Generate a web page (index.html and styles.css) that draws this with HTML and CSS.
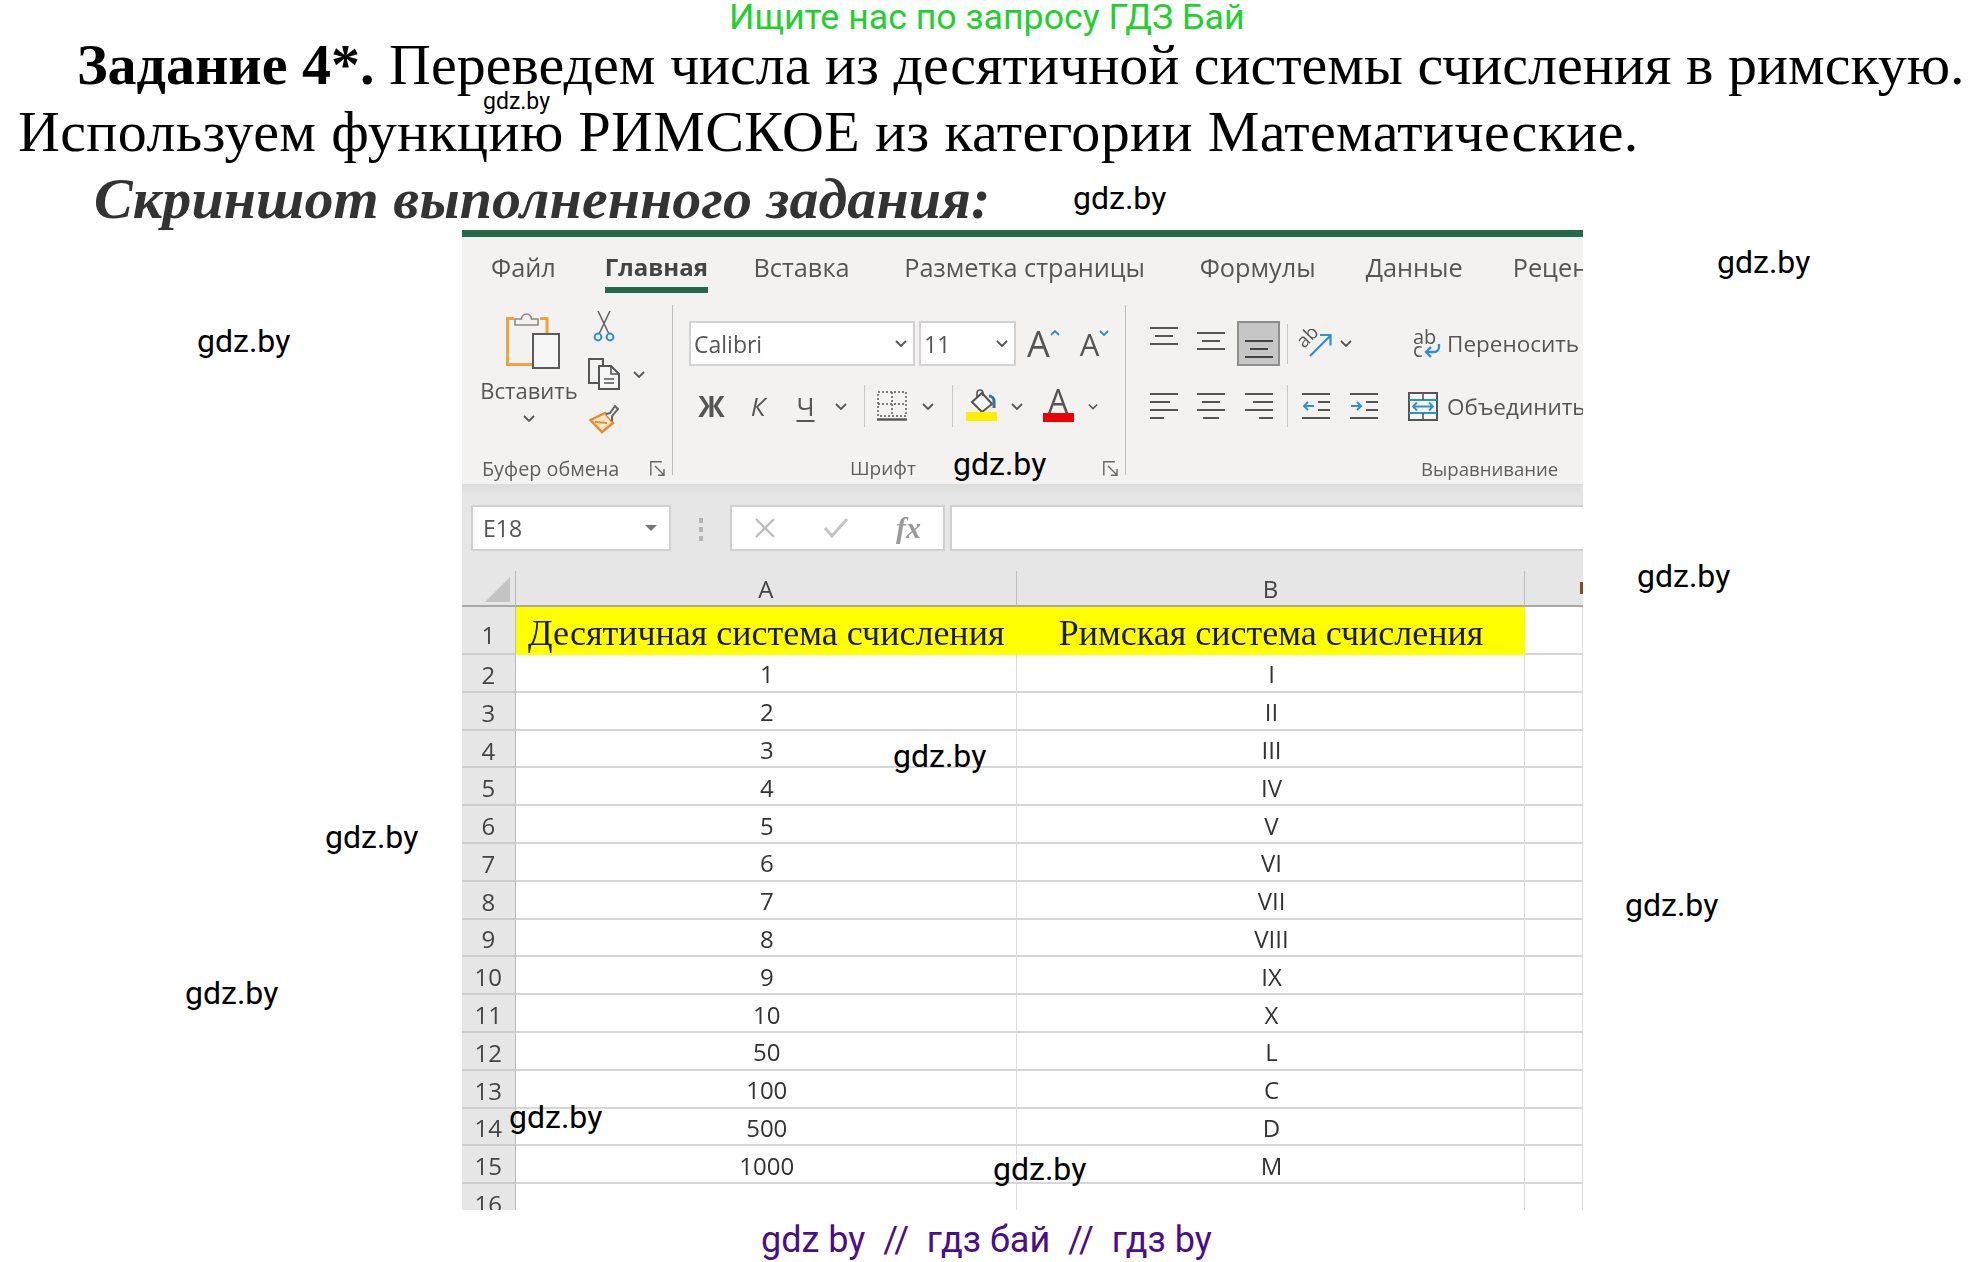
FILE: index.html
```html
<!DOCTYPE html>
<html lang="ru">
<head>
  <meta charset="UTF-8">
  <title>Задание 4</title>
  <link rel="stylesheet" href="styles.css">
</head>
<body>
<div class="page">
  <div class="promo">Ищите нас по запросу ГДЗ Бай</div>

  <div class="task">
    <p class="line first"><b>Задание 4*.</b> Переведем числа из десятичной системы счисления в римскую.</p>
    <p class="line second">Используем функцию РИМСКОЕ из категории Математические.</p>
    <p class="line shot-title">Скриншот выполненного задания:</p>
  </div>

  <div class="shot">
    <div class="ribbon">
      <div class="tabs">
        <span class="tab">Файл</span>
        <span class="tab active">Главная</span>
        <span class="tab">Вставка</span>
        <span class="tab">Разметка страницы</span>
        <span class="tab">Формулы</span>
        <span class="tab">Данные</span>
        <span class="tab">Рецен</span>
      </div>

      <div class="groups">
        <!-- буфер обмена -->
        <div class="group clip-group">
          <div class="clip-body">
            <div class="paste">
              <svg class="ic-paste" viewBox="0 0 54 58" width="54" height="58">
                <path d="M8 7.500H1.500v46H26M34 7.500h7V22" fill="none" stroke="#eea33c" stroke-width="3"/>
                <path d="M9 14V8h6.500a5 5 0 0 1 10 0H32v6z" fill="#f3f2f1" stroke="#8a8a8a" stroke-width="1.600"/>
                <rect x="27" y="23" width="26" height="34" fill="#f6f6f6" stroke="#5a5a5a" stroke-width="2"/>
              </svg>
              <span class="paste-label">Вставить</span>
              <svg class="chev paste-chev" viewBox="0 0 12 7" width="12" height="7"><path d="M1 1l5 5 5-5" fill="none" stroke="#555" stroke-width="1.800"/></svg>
            </div>
            <div class="clip-tools">
              <svg class="ic-cut" viewBox="0 0 22 31" width="22" height="31">
                <path d="M5 0l11 23M17 0L6 23" fill="none" stroke="#666" stroke-width="1.600"/>
                <circle cx="5" cy="26" r="3.400" fill="none" stroke="#2f8fcf" stroke-width="2"/>
                <circle cx="17" cy="26" r="3.400" fill="none" stroke="#2f8fcf" stroke-width="2"/>
              </svg>
              <div class="copy-row">
                <svg viewBox="0 0 32 32" width="32" height="32">
                  <path d="M11 25H1V1h14v7" fill="none" stroke="#555" stroke-width="2"/>
                  <path d="M11 8h12l8 8v15H11z" fill="#f6f6f6" stroke="#555" stroke-width="2"/>
                  <path d="M23 8v8h8M16 21h10M16 25h10" fill="none" stroke="#555" stroke-width="1.600"/>
                </svg>
                <svg class="chev" viewBox="0 0 12 7" width="12" height="7"><path d="M1 1l5 5 5-5" fill="none" stroke="#555" stroke-width="1.800"/></svg>
              </div>
              <svg class="ic-brush" viewBox="0 0 30 29" width="30" height="29">
                <path d="M1.500 15L16 8l8 10-11 9z" fill="#fbe6cc" stroke="#e78b2b" stroke-width="2.400"/>
                <path d="M6 17l12 1" stroke="#e78b2b" stroke-width="2"/>
                <path d="M17 9l4-1 5-7 3 3-6 7v5" fill="#f3f2f1" stroke="#666" stroke-width="2"/>
              </svg>
            </div>
          </div>
          <div class="group-foot">
            <span class="group-name">Буфер обмена</span>
            <svg class="launcher" viewBox="0 0 15 15" width="15" height="15"><path d="M.8 14.500V.8h11M5 5l9 9M14 8v6.200H8" fill="none" stroke="#666" stroke-width="1.400"/></svg>
          </div>
        </div>

        <div class="sep-main"></div>

        <!-- шрифт -->
        <div class="group font-group">
          <div class="font-row-a">
            <div class="select font-name">Calibri<svg class="chev" viewBox="0 0 12 7" width="12" height="7"><path d="M1 1l5 5 5-5" fill="none" stroke="#555" stroke-width="1.800"/></svg></div>
            <div class="select font-size">11<svg class="chev" viewBox="0 0 12 7" width="12" height="7"><path d="M1 1l5 5 5-5" fill="none" stroke="#555" stroke-width="1.800"/></svg></div>
            <span class="grow">A<svg viewBox="0 0 10 6" width="10" height="6"><path d="M1 5l4-4 4 4" fill="none" stroke="#2f8fcf" stroke-width="1.800"/></svg></span>
            <span class="shrink">A<svg viewBox="0 0 10 6" width="10" height="6"><path d="M1 1l4 4 4-4" fill="none" stroke="#2f8fcf" stroke-width="1.800"/></svg></span>
          </div>
          <div class="font-row-b">
            <span class="cell bold">Ж</span>
            <span class="cell italic">К</span>
            <span class="cell under">Ч</span>
            <span class="cell"><svg class="chev" viewBox="0 0 12 7" width="12" height="7"><path d="M1 1l5 5 5-5" fill="none" stroke="#555" stroke-width="1.800"/></svg></span>
            <span class="cell"><i class="sep-small"></i></span>
            <span class="cell">
              <svg viewBox="0 0 30 30" width="30" height="30">
                <path d="M1 1h28v24H1zM15 1v24M1 13h28" fill="none" stroke="#555" stroke-width="1.400" stroke-dasharray="2 2"/>
                <path d="M0 28.500h30" stroke="#555" stroke-width="2.400"/>
              </svg>
            </span>
            <span class="cell"><svg class="chev" viewBox="0 0 12 7" width="12" height="7"><path d="M1 1l5 5 5-5" fill="none" stroke="#555" stroke-width="1.800"/></svg></span>
            <span class="cell"><i class="sep-small"></i></span>
            <span class="cell stack">
              <svg viewBox="0 0 30 23" width="30" height="23">
                <path d="M5 13L15 4l10 11-10 8z" fill="#f6f6f6" stroke="#555" stroke-width="2"/>
                <path d="M10 9V4a3 3 0 0 1 6 0v3" fill="none" stroke="#555" stroke-width="1.600"/>
                <path d="M22 7a5 5 0 0 1 5 5v7" fill="none" stroke="#2d72a8" stroke-width="3"/>
              </svg>
              <i class="colour-bar yellow"></i>
            </span>
            <span class="cell"><svg class="chev" viewBox="0 0 12 7" width="12" height="7"><path d="M1 1l5 5 5-5" fill="none" stroke="#555" stroke-width="1.800"/></svg></span>
            <span class="cell stack"><span class="colour-a">A</span><i class="colour-bar red"></i></span>
            <span class="cell"><svg class="chev" viewBox="0 0 12 7" width="12" height="7"><path d="M1 1l5 5 5-5" fill="none" stroke="#555" stroke-width="1.800"/></svg></span>
          </div>
          <div class="group-foot font-foot">
            <span class="group-name">Шрифт</span>
            <svg class="launcher" viewBox="0 0 15 15" width="15" height="15"><path d="M.8 14.500V.8h11M5 5l9 9M14 8v6.200H8" fill="none" stroke="#666" stroke-width="1.400"/></svg>
          </div>
        </div>

        <div class="sep-main"></div>

        <!-- выравнивание -->
        <div class="group align-group">
          <div class="align-body">
            <div class="align-grid">
              <span class="cell v-top"><svg viewBox="0 0 28 18" width="28" height="18"><path d="M0 1h28M5 9h18M0 17h28" stroke="#555" stroke-width="2"/></svg></span>
              <span class="cell v-mid"><svg viewBox="0 0 28 18" width="28" height="18"><path d="M0 1h28M5 9h18M0 17h28" stroke="#555" stroke-width="2"/></svg></span>
              <span class="cell pressed"><svg viewBox="0 0 28 18" width="28" height="18"><path d="M0 1h28M5 9h18M0 17h28" stroke="#444" stroke-width="2"/></svg></span>
              <span class="cell"><i class="sep-small short"></i></span>
              <span class="cell">
                <svg class="ic-orient" viewBox="0 0 34 30" width="34" height="30">
                  <text class="svg-ab" transform="translate(6 20) rotate(-45)" x="0" y="0">ab</text>
                  <path d="M12 27L32 7M22 6h10.500v10.500" fill="none" stroke="#2f8fcf" stroke-width="2.200"/>
                </svg>
              </span>
              <span class="cell start"><svg class="chev" viewBox="0 0 12 7" width="12" height="7"><path d="M1 1l5 5 5-5" fill="none" stroke="#555" stroke-width="1.800"/></svg></span>

              <span class="cell"><svg viewBox="0 0 28 26" width="28" height="26"><path d="M0 1h28M0 9h20M0 17h28M0 25h14" stroke="#555" stroke-width="2"/></svg></span>
              <span class="cell"><svg viewBox="0 0 28 26" width="28" height="26"><path d="M0 1h28M5 9h18M0 17h28M6 25h16" stroke="#555" stroke-width="2"/></svg></span>
              <span class="cell"><svg viewBox="0 0 28 26" width="28" height="26"><path d="M0 1h28M8 9h20M0 17h28M14 25h14" stroke="#555" stroke-width="2"/></svg></span>
              <span class="cell"><i class="sep-small"></i></span>
              <span class="cell">
                <svg viewBox="0 0 28 26" width="28" height="26">
                  <path d="M0 1h28M16 9h12M16 17h12M0 25h28" stroke="#555" stroke-width="2"/>
                  <path d="M12 13H2M6 9l-4 4 4 4" fill="none" stroke="#2f8fcf" stroke-width="2"/>
                </svg>
              </span>
              <span class="cell">
                <svg viewBox="0 0 28 26" width="28" height="26">
                  <path d="M0 1h28M16 9h12M16 17h12M0 25h28" stroke="#555" stroke-width="2"/>
                  <path d="M1 13h10M7 9l4 4-4 4" fill="none" stroke="#2f8fcf" stroke-width="2"/>
                </svg>
              </span>
            </div>
            <i class="sep-tall"></i>
            <div class="merge-list">
              <div class="merge-row">
                <svg class="ic-wrap" viewBox="0 0 29 30" width="29" height="30">
                  <text class="svg-wrap" x="0" y="15">ab</text>
                  <text class="svg-wrap" x="0" y="28">c</text>
                  <path d="M26 15v3a5 5 0 0 1-5 5H13M18 18l-5 5 5 5" fill="none" stroke="#2f8fcf" stroke-width="2.400"/>
                </svg>
                <span>Переносить</span>
              </div>
              <div class="merge-row">
                <svg class="ic-merge" viewBox="0 0 30 29" width="30" height="29">
                  <rect x="1" y="1" width="28" height="27" fill="#f6f6f6" stroke="#555" stroke-width="2"/>
                  <path d="M1 8h28M1 21h28" stroke="#2f8fcf" stroke-width="2"/>
                  <path d="M15 1v7M15 21v7" stroke="#555" stroke-width="1.600"/>
                  <path d="M5 14.500h20M9 10.500l-4 4 4 4M21 10.500l4 4-4 4" fill="none" stroke="#2f8fcf" stroke-width="1.800"/>
                </svg>
                <span>Объединить</span>
              </div>
            </div>
          </div>
          <div class="group-foot align-foot"><span class="group-name">Выравнивание</span></div>
        </div>
      </div>
    </div>

    <div class="formula">
      <div class="name-box">E18<i class="name-arrow"></i></div>
      <div class="grip"><i></i><i></i><i></i></div>
      <div class="fx-box">
        <svg viewBox="0 0 22 22" width="22" height="22"><path d="M2 2l18 18M20 2L2 20" stroke="#bdbdbd" stroke-width="2.400"/></svg>
        <svg viewBox="0 0 26 22" width="26" height="22"><path d="M2 11l7 8L24 2" fill="none" stroke="#c4c4c4" stroke-width="3"/></svg>
        <span class="fx">fx</span>
      </div>
      <div class="formula-input"></div>
    </div>

    <div class="sheet">
      <div class="corner"><i class="corner-mark"></i></div>
      <div class="col-head">A</div>
      <div class="col-head">B</div>
      <div class="col-head last"><i class="col-c-mark"></i></div>

      <div class="num first-num">1</div><div class="cell-x yellow-cell serif">Десятичная система счисления</div><div class="cell-x yellow-cell serif">Римская система счисления</div><div class="cell-x"></div>
      <div class="num">2</div><div class="cell-x">1</div><div class="cell-x">I</div><div class="cell-x"></div>
      <div class="num">3</div><div class="cell-x">2</div><div class="cell-x">II</div><div class="cell-x"></div>
      <div class="num">4</div><div class="cell-x">3</div><div class="cell-x">III</div><div class="cell-x"></div>
      <div class="num">5</div><div class="cell-x">4</div><div class="cell-x">IV</div><div class="cell-x"></div>
      <div class="num">6</div><div class="cell-x">5</div><div class="cell-x">V</div><div class="cell-x"></div>
      <div class="num">7</div><div class="cell-x">6</div><div class="cell-x">VI</div><div class="cell-x"></div>
      <div class="num">8</div><div class="cell-x">7</div><div class="cell-x">VII</div><div class="cell-x"></div>
      <div class="num">9</div><div class="cell-x">8</div><div class="cell-x">VIII</div><div class="cell-x"></div>
      <div class="num">10</div><div class="cell-x">9</div><div class="cell-x">IX</div><div class="cell-x"></div>
      <div class="num">11</div><div class="cell-x">10</div><div class="cell-x">X</div><div class="cell-x"></div>
      <div class="num">12</div><div class="cell-x">50</div><div class="cell-x">L</div><div class="cell-x"></div>
      <div class="num">13</div><div class="cell-x">100</div><div class="cell-x">C</div><div class="cell-x"></div>
      <div class="num">14</div><div class="cell-x">500</div><div class="cell-x">D</div><div class="cell-x"></div>
      <div class="num">15</div><div class="cell-x">1000</div><div class="cell-x">M</div><div class="cell-x"></div>
      <div class="num">16</div><div class="cell-x"></div><div class="cell-x"></div><div class="cell-x"></div>
    </div>
  </div>

  <div class="footer-links">gdz by &nbsp;//&nbsp; гдз бай &nbsp;//&nbsp; гдз by</div>

  <span class="wm wm-small">gdz.by</span>
  <span class="wm w1">gdz.by</span>
  <span class="wm w2">gdz.by</span>
  <span class="wm w3">gdz.by</span>
  <span class="wm w4">gdz.by</span>
  <span class="wm w5">gdz.by</span>
  <span class="wm w6">gdz.by</span>
  <span class="wm w7">gdz.by</span>
  <span class="wm w8">gdz.by</span>
  <span class="wm w9">gdz.by</span>
  <span class="wm w10">gdz.by</span>
  <span class="wm w11">gdz.by</span>
</div>
</body>
</html>
```

FILE: styles.css
```css
* { box-sizing: border-box; margin: 0; padding: 0; }
body { background: #fff; color: #000; font-family: "Liberation Serif", serif; }
i { display: block; }

.page { position: relative; width: 1975px; height: 1262px; overflow: hidden; }

.promo {
  height: 31px; padding-left: 729px;
  font: 35.700px/34px Roboto, sans-serif; color: #1fd02f; white-space: nowrap;
}

.task { padding-left: 18px; }
.line { font-size: 58px; line-height: 67px; white-space: nowrap; }
.line.first { padding-left: 59px; }
.line.second { letter-spacing: 0.370px; }
.shot-title {
  padding-left: 76px; font-weight: bold; font-style: italic; color: #333; letter-spacing: 0.100px;
}

/* скриншот excel */
.shot {
  width: 1121px; height: 980px; margin-left: 462px; margin-top: -2px;
  overflow: hidden; border-top: 7px solid #23694a;
  font-family: "Open Sans", sans-serif; color: #555;
  filter: blur(0.4px);
}

.ribbon { height: 247px; background: #f3f2f1; display: flex; flex-direction: column; }

.tabs { display: flex; height: 56px; padding-left: 29px; white-space: nowrap; font-size: 25.300px; }
.tab { margin-right: 50px; line-height: 60px; }
.tab:nth-child(1) { margin-right: 49px; }
.tab:nth-child(3), .tab:nth-child(4) { margin-right: 54.700px; }
.tab.active { margin-right: 45.500px; font-size: 24px; font-weight: bold; color: #444; border-bottom: 6px solid #23694a; height: 56px; }

.groups { display: flex; flex: 1; min-height: 0; }
.group { display: flex; flex-direction: column; position: relative; }
.sep-main { width: 1px; height: 170px; margin-top: 12px; background: #bdbdbd; }

.group-foot { display: flex; align-items: center; height: 30px; margin-top: auto; padding-bottom: 2px; }
.group-name { font-size: 19.800px; color: #5f5f5f; }
.launcher { margin-left: auto; }

/* буфер */
.clip-group { width: 210px; padding-right: 7px; }
.clip-group .group-foot { padding-left: 20px; }
.clip-body { display: flex; padding-top: 18px; }
.paste { width: 121px; padding-left: 13px; display: flex; flex-direction: column; align-items: center; }
.ic-paste { margin-left: 8px; }
.paste-label { font-size: 22px; line-height: 28px; margin-top: 7px; }
.paste-chev { margin-top: 11px; }
.clip-tools { display: flex; flex-direction: column; }
.ic-cut { margin-left: 10px; }
.copy-row { display: flex; align-items: center; margin-top: 16px; margin-left: 5px; }
.copy-row .chev { margin-left: 13px; }
.ic-brush { margin-top: 15px; margin-left: 6px; }

/* шрифт */
.font-group { width: 452px; padding-left: 16px; padding-right: 7px; }
.font-row-a { display: flex; align-items: center; height: 45px; margin-top: 28px; }
.select {
  display: flex; align-items: center; justify-content: space-between;
  height: 45px; background: #fff; border: 2px solid #d2d2d2; padding: 0 6px 0 3px;
  font-size: 23px;
}
.font-name { width: 226px; margin-right: 4px; }
.font-size { width: 97px; padding-left: 3px; }
.grow, .shrink { display: flex; align-items: flex-start; font-weight: 400; }
.grow { font-size: 36px; margin-left: 11px; line-height: 44px; }
.shrink { font-size: 31px; margin-left: 20px; line-height: 44px; }
.grow svg, .shrink svg { margin-top: 8px; }

.font-row-b {
  display: grid; height: 42px; margin-top: 19px;
  grid-template-columns: 45px 48px 47px 24px 22px 34px 38px 10px 49px 22px 60px 10px;
}
.cell { display: flex; align-items: center; justify-content: center; min-width: 0; }
.cell.start { justify-content: flex-start; }
.bold { font-weight: bold; font-size: 28px; }
.italic { font-style: italic; font-size: 26px; }
.under { font-size: 26px; text-decoration: underline; text-underline-offset: 4px; }
.sep-small { width: 1px; height: 42px; background: #c8c8c8; }
.sep-small.short { height: 40px; }
.stack { flex-direction: column; justify-content: flex-start; padding-top: 4px; }
.colour-a { font-size: 32px; line-height: 24px; font-weight: 400; }
.colour-bar { width: 31px; height: 9px; flex: none; }
.colour-bar.yellow { background: #ffee00; }
.colour-bar.red { background: #ee0000; }

.font-foot .group-name { margin-left: 161px; font-size: 19px; }

/* выравнивание */
.align-group { flex: 1; min-width: 0; }
.align-body { display: flex; align-items: flex-start; }
.align-grid {
  display: grid; margin-left: 14px; margin-top: 28px; row-gap: 19px;
  grid-template-columns: 47px 48px 47px 10px 48px 48px;
  grid-template-rows: 45px 42px;
}
.v-top { padding-bottom: 15px; }
.v-mid { padding-bottom: 5px; }
.pressed { background: #c6c6c6; border: 2px solid #8e8e8e; margin: 0 2px; padding-top: 10px; }
.ic-orient { margin-left: -2px; }
.svg-ab { font: 19px "Open Sans", sans-serif; fill: #555; }
.svg-wrap { font: 20px "Open Sans", sans-serif; fill: #555; }
.sep-tall { width: 1px; height: 116px; margin-top: 23px; margin-left: 6px; background: #c8c8c8; }
.merge-list { margin-top: 28px; white-space: nowrap; font-size: 22.500px; }
.merge-row { display: grid; grid-template-columns: 53px auto; align-items: center; height: 45px; }
.merge-row + .merge-row { margin-top: 19px; height: 42px; }
.ic-wrap { justify-self: end; margin-right: 5px; }
.ic-merge { margin-left: 14px; }
.align-foot .group-name { margin-left: 295px; font-size: 18.600px; }

/* строка формул */
.formula {
  display: flex; align-items: flex-start; height: 87px; padding: 21px 0 0 9px;
  background: linear-gradient(#dcdcdc, #e6e6e6 12px);
}
.name-box {
  display: flex; align-items: center; justify-content: space-between;
  width: 200px; height: 46px; padding: 0 12px 0 10px;
  background: #fff; border: 2px solid #d0d0d0; font-size: 23px;
}
.name-arrow { width: 0; height: 0; border: 6px solid transparent; border-top: 6px solid #777; border-bottom: 0; }
.grip { display: flex; flex-direction: column; gap: 4px; width: 59px; padding: 13px 0 0 28px; }
.grip i { width: 4px; height: 5px; background: #b4b4b4; }
.fx-box {
  display: flex; align-items: center; justify-content: space-between;
  width: 215px; height: 46px; padding: 0 22px; background: #fff; border: 2px solid #d0d0d0;
}
.fx { font: italic bold 30px "Liberation Serif", serif; color: #9a9a9a; }
.formula-input { flex: 1; height: 46px; margin-left: 5px; background: #fff; border: 2px solid #d0d0d0; border-right: 0; }

/* таблица */
.sheet {
  display: grid; background: #fff;
  grid-template-columns: 53.500px 501.500px 508px 58px;
  grid-template-rows: 36px 48px repeat(15, 37.800px);
  font-size: 24px; color: #333;
}
.corner { background: #e6e6e6; border-right: 1px solid #bbb; border-bottom: 2px solid #a8a8a8; position: relative; }
.corner-mark {
  position: absolute; left: 23px; top: 6px; width: 0; height: 0;
  border-left: 25px solid transparent; border-bottom: 25px solid #c4c4c4;
}
.col-head {
  display: flex; align-items: center; justify-content: center;
  background: #e6e6e6; border-right: 1px solid #bdbdbd; border-bottom: 2px solid #a8a8a8;
  color: #444;
}
.col-head.last { border-right: 0; justify-content: flex-end; }
.col-c-mark { width: 3px; height: 12px; background: #8a4a20; }
.num {
  display: flex; align-items: center; justify-content: center;
  background: #e6e6e6; border-right: 1px solid #bdbdbd; border-bottom: 2px solid #cdcdcd;
  color: #444; padding-top: 3px;
}
.num.first-num { padding-top: 9px; }
.cell-x {
  display: flex; align-items: center; justify-content: center;
  border-right: 1px solid #dcdcdc; border-bottom: 2px solid #d6d6d6; padding: 2px 0 0 2px;
}
.yellow-cell { background: #ffff00; border: 0; }
.serif { font-family: "Liberation Serif", serif; font-size: 36px; color: #1a1a00; padding: 4px 0 0; }

.footer-links {
  margin-top: 10px; padding-left: 761px;
  font: 36px/40px Roboto, sans-serif; color: #4a0d8c; white-space: nowrap;
}

/* водяные знаки */
.wm { position: absolute; font: 32px/1 Roboto, sans-serif; color: #000; white-space: nowrap; }
.wm-small { left: 483px; top: 90px; font-size: 23px; }
.w1 { left: 1073px; top: 182px; }
.w2 { left: 1717px; top: 246px; }
.w3 { left: 197px; top: 325px; }
.w4 { left: 953px; top: 448px; }
.w5 { left: 1637px; top: 560px; }
.w6 { left: 893px; top: 740px; }
.w7 { left: 325px; top: 821px; }
.w8 { left: 1625px; top: 889px; }
.w9 { left: 185px; top: 977px; }
.w10 { left: 509px; top: 1101px; }
.w11 { left: 993px; top: 1153px; }
```
